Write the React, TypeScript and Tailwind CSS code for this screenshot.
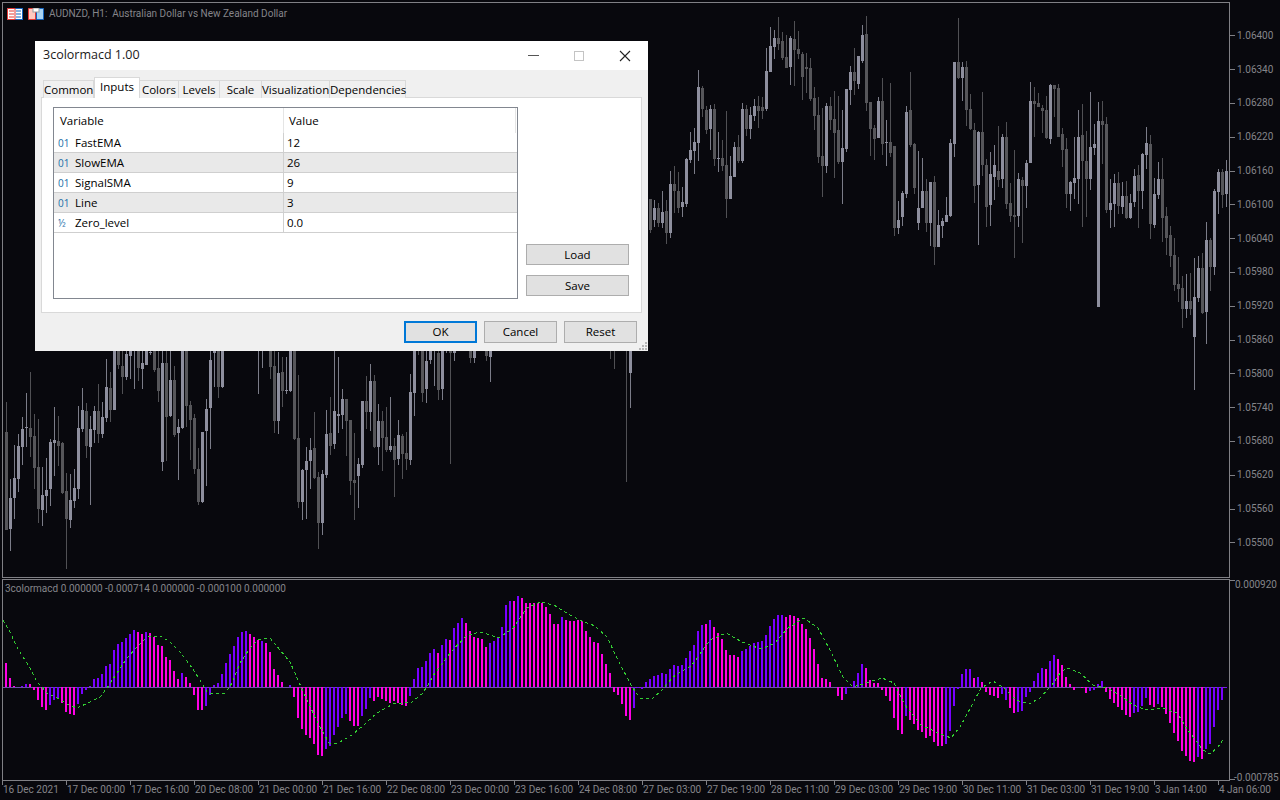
import React from "react";

type Candle = { x: number; wt: number; bt: number; bb: number; wb: number; light: boolean };

function parseCandles(start: number, base: number, scale: number, src: string): Candle[] {
  const out: Candle[] = [];
  src.trim().split(/\s+/).forEach((tok, k) => {
    if (tok === "-") return;
    const light = tok[0] === "l";
    const [wt, bt, bb, wb] = tok.slice(1).split(",").map(Number);
    out.push({
      x: 5 + 4 * (start + k),
      wt: base + wt / scale,
      bt: base + bt / scale,
      bb: base + bb / scale,
      wb: base + wb / scale,
      light,
    });
  });
  return out;
}

const candles: Candle[] = [
  ...parseCandles(0, 350, 3, `d155,247,540,540 l388,444,537,603 l285,384,444,507 l252,288,387,426 l201,237,290,345 l129,232,235,290 d66,234,261,321 d192,258,354,417 d207,351,477,519 l351,435,480,528
  l324,420,438,489 l267,276,417,468 l171,270,279,378 d198,273,288,348 d276,279,429,432 d369,423,507,657 l372,450,510,534 l357,414,453,474 l168,234,417,447 l114,180,237,246
  d159,183,288,324 l198,237,291,465 l168,183,240,279 d102,183,252,279 l156,201,252,264 l27,111,204,216 d66,114,180,216 l0,0,180,180 d0,0,45,57 d0,48,81,132
  l0,12,81,90 l0,0,18,87 l0,0,0,117 d0,0,54,93 l0,39,57,117 l0,0,45,45 l0,6,9,15 d0,0,60,66 d0,54,123,156 l0,39,336,363
  d0,39,201,333 l0,90,198,201 d48,90,255,261 l207,231,249,390 l0,0,234,237 d0,0,168,231 d153,165,210,330 d192,204,357,372 d294,357,456,465 l246,246,456,459
  l147,177,243,408 l0,30,174,297 l0,0,9,111 d0,0,111,144 l0,0,111,114 - - - - -
  - - - l0,0,0,132 l0,0,0,54 - d0,0,51,87 d0,48,213,249 l6,69,213,252 d21,66,123,171
  l21,120,123,132 l0,0,123,126 d0,0,267,270 d75,264,456,474 l357,360,456,510 l291,333,360,507 l264,300,333,417 d186,294,384,387 d366,381,519,597`),
  ...parseCandles(79, 350, 3, `l360,372,519,555 l180,252,375,384 d141,249,288,315 l0,183,282,297 l21,192,198,249 l117,147,195,237 d147,147,213,318 d210,210,393,435 d249,390,399,510 l324,342,378,474
  l153,153,345,354 d78,153,186,237 l42,93,186,243 d75,93,291,294 l162,213,291,345 d183,213,264,363 d171,261,300,306 l141,288,300,306 d264,288,330,441 l210,255,327,345
  d252,258,312,387 d246,309,327,360 l72,126,330,345 l0,0,129,198 d0,0,0,15 d0,0,129,156 l0,33,117,159 l0,0,30,42 l0,0,0,108 d0,9,120,150
  l0,0,117,150 l0,0,0,9 d0,0,9,342 l0,0,9,33 - - - d0,0,24,39 l0,0,24,39 -
  - d0,0,18,33 l0,0,21,96`),
  ...parseCandles(151, 350, 3, `d0,0,0,27 d0,0,0,57 - - d0,0,0,396 l0,0,69,174`),
  ...parseCandles(161, 0, 3, `d597,597,690,700 l600,624,660,680 d610,624,670,680 l573,636,669,684 d600,633,699,732 l514,552,699,714 d498,552,573,639 d516,573,624,639 l561,606,621,651 l474,477,612,621
  l396,450,480,489 l384,426,453,522 l210,261,429,483 d258,264,327,351 d318,330,390,402 l315,327,387,450 d312,327,477,498 l396,474,477,516 d420,474,498,513 d333,495,597,654
  l468,528,597,597 l426,441,531,531 d405,441,483,490 l309,327,483,489 d315,327,387,408 l320,345,387,417 l297,318,348,363 d288,318,333,384 d291,321,333,357 l144,213,327,333
  l81,138,216,216 l90,114,141,177 d51,114,132,150 d96,123,174,180 d105,171,204,204 l108,114,201,255 d63,117,150,258 d93,147,162,177 d156,162,231,300 d159,201,207,279
  d174,204,297,303 d261,294,348,390 d291,345,471,489 d324,468,498,591 l309,318,498,519 d291,318,360,390 d273,357,399,534 d288,390,486,492 l330,444,486,612 l267,267,447,456
  l198,216,270,315 d144,216,243,285 l168,168,252,267 l75,105,183,189 d48,102,309,333 d306,306,387,468 d375,384,417,480 l291,303,414,414 d234,303,432,465 l360,426,429,498
  d249,426,459,471 d438,438,684,708 l603,660,684,702 l573,579,651,678 l318,336,582,594 d216,330,435,441 d429,432,564,582 l453,624,669,690 l474,573,624,624 d537,573,669,696
  l546,546,669,738 d528,546,741,795 l630,675,741,741 l654,663,678,714 l591,645,666,666 l417,429,648,651 l186,186,432,471 d54,186,234,237 l186,201,234,303 d183,201,330,378`),
  ...parseCandles(241, 0, 3, `d282,327,387,390 d369,390,558,609 l393,396,555,735 d276,396,495,528 d477,495,621,681 l456,522,615,678 l435,495,531,600 d378,513,540,561 l402,411,537,564 d366,411,612,627
  d549,609,648,666 d450,645,651,774 l519,537,648,681 d531,540,558,729 l480,489,558,624 l246,303,489,489 d261,303,312,411 d279,309,321,321 d315,324,333,399 d288,330,414,417
  l252,255,417,432 d255,255,267,351 d252,264,411,411 d384,402,450,501 d414,447,582,624 l543,546,582,633 l411,534,549,597 l330,411,537,612 d312,405,483,681 d393,483,537,651
  l276,441,537,570 l372,432,444,465 l306,363,921,921 d303,363,375,492 d351,372,630,639 l537,609,630,684 l522,549,612,681 d516,549,618,642 l546,588,621,642 d543,588,654,657
  l582,609,654,657 l507,528,606,621 d495,525,573,684 l459,462,573,627 l381,429,465,507 d405,432,672,717 l534,582,675,684 l486,537,585,597 d474,537,654,726 d621,648,714,765
  d678,705,768,801 d714,765,855,873 d771,852,867,906`),
  ...parseCandles(294, 140, 3, `d408,444,507,564 l402,483,507,534 d399,483,507,525 l354,471,591,750 l348,384,474,486 d339,384,519,522 l246,300,516,612 d294,300,381,453 l147,153,381,405 l87,96,156,222 d87,96,165,204 l60,93,162,201`),
];

const histSrc = `m72 m28 m4 p2 p4 p10 m10 m-8 m-40 m-60 m-70 p-55 p-40 p-33 m-48 m-74 m-82 m-85 p-52 p-20
p-10 p4 p26 p28 p40 p64 p70 p112 p130 p136 p147 p160 p172 m166 m160 p166 m163 m150 m128 m125
m92 m82 m50 m25 p43 m31 m13 m-25 m-70 m-70 p-58 p-25 p6 p13 p40 p73 p100 p123 p150 p167
p168 m160 m150 m142 p140 m133 m106 m55 m36 m16 p-1 p6 m-30 m-94 m-127 m-145 m-153 m-172 m-205
m-208 p-185 p-176 p-143 p-119 p-92 p-80 m-101 m-116 m-116
p-86 p-65 p-32 m-41 m-30 m-35 m-41 m-48 m-41 m-48
m-53 m-56 p-26 p25 p58 p60 p79 p103 p115 m103
p127 p145 m142 p178 p194 p208 m193 m169 m151 m148
m145 m121 p133 p139 p147 p181 p247 p259 m259 p274
m268 m253 m253 m253 m253 m253 m241 m220 m190 m190
p211 m202 m199 m199 m202 m199 m169 m151 m136 m133
m100 m70 m43 m-14 m-23 m-50 m-86 m-98 p-62 p-2
p-5 p16 p25 p34 p37 p43 p40 p55 p67 p64
p67 p88 p109 p127 p169 p187 m190 p202 m181 m163
m145 m112 m97 m97 m91 p109 p115 p124 p133 p136
p139 p157 p184 p205 p217 p217 m211 m217 m214 m208
m190 m175 m148 m115 m70 m28 m25 m16 m0 m-26
m-38 p-20 p-2 p19 p43 p70 m58 m22 m13 m13
m-8 m-26 m-41 m-92 m-128 m-140 p-86 m-98 m-110 m-128
m-136 m-152 m-146 m-164 m-176 m-176 p-170 p-132 p-56 p-6
p40 p55 p55 m28 p31 m16 m-14 m-23 m-26 m-32
p-20 p-38 m-62 m-77 p-74 p-71 p-29 p-14 p19 p43
p58 m55 p79 p97 m85 m67 m31 m10 m-8 m-1 m-4 m-18 p-12 p-8 p9 p19
m-14 m-37 m-47 m-61 m-70 m-85 m-91 p-79 p-76 p-56 p-34 m-55 m-59 p-50 m-60 m-82 m-107 m-139 m-163 m-193
m-208 m-222 m-226 p-211 m-217 p-185 p-172 p-121 p-70 p-40 p-4`;

const hist = histSrc.trim().split(/\s+/).map((t, i) => ({
  x: 5 + 4 * i,
  purple: t[0] === "p",
  v: Number(t.slice(1)) / 3,
}));

const signal =
  "3,620 10,632 17,647 23,657 30,668 37,682 47,693 57,698 67,704 77,708 88,703 100,697 107,688 117,673 127,658 137,647 147,637 160,636 170,642 180,652 190,665 200,680 207,692 213,694 225,693 232,683 240,663 250,648 258,640 270,638 280,650 290,662 298,680 307,700 318,723 329,743 338,743 352,735 366,723 377,713 393,704 412,702 423,693 435,673 451,652 467,635 481,632 499,638 513,628 527,608 540,602 554,605 568,614 582,621 595,626 607,637 618,660 632,687 641,699 653,698 662,690 673,677 692,665 710,640 726,633 742,642 761,649 775,643 788,628 804,618 818,628 830,650 843,677 853,687 866,683 882,678 894,683 905,705 921,725 938,733 951,738 960,727 972,705 981,688 993,681 1004,688 1016,700 1029,704 1040,698 1052,685 1060,673 1067,668 1080,673 1093,685 1107,688 1120,695 1133,705 1147,710 1163,708 1177,713 1190,733 1203,750 1210,754 1218,747 1224,738";

const prices = ["1.06400","1.06340","1.06280","1.06220","1.06160","1.06100","1.06040","1.05980","1.05920","1.05860","1.05800","1.05740","1.05680","1.05620","1.05560","1.05500"];
const times = ["16 Dec 2021","17 Dec 00:00","17 Dec 16:00","20 Dec 08:00","21 Dec 00:00","21 Dec 16:00","22 Dec 08:00","23 Dec 00:00","23 Dec 16:00","24 Dec 08:00","27 Dec 03:00","27 Dec 19:00","28 Dec 11:00","29 Dec 03:00","29 Dec 19:00","30 Dec 11:00","31 Dec 03:00","31 Dec 19:00","3 Jan 14:00","4 Jan 06:00"];
const tabs = [
  { n: "Common", w: "w-[51px]" },
  { n: "Inputs", w: "w-[46px]" },
  { n: "Colors", w: "w-[40px]" },
  { n: "Levels", w: "w-[42px]" },
  { n: "Scale", w: "w-[43px]" },
  { n: "Visualization", w: "w-[69px]" },
  { n: "Dependencies", w: "w-[77px]" },
];
const rows = [
  { i: "01", n: "FastEMA", v: "12" },
  { i: "01", n: "SlowEMA", v: "26" },
  { i: "01", n: "SignalSMA", v: "9" },
  { i: "01", n: "Line", v: "3" },
  { i: "½", n: "Zero_level", v: "0.0" },
];

function MainChart() {
  return (
    <svg viewBox="3 3 1226 574" width={1226} height={574} className="block" shapeRendering="crispEdges">
      {candles.map((c, i) => (
        <g key={i}>
          <rect x={c.x + 1} y={c.wt} width={1} height={Math.max(c.wb - c.wt, 0)} fill={c.light ? "#7b7c88" : "#505054"} />
          {c.bb > c.bt && <rect x={c.x} y={c.bt} width={3} height={Math.max(c.bb - c.bt, 1)} fill={c.light ? "#8e8f9e" : "#56565a"} />}
        </g>
      ))}
    </svg>
  );
}

function IndicatorChart() {
  return (
    <svg viewBox="3 580 1226 200" width={1226} height={200} className="block" shapeRendering="crispEdges">
      <rect x={3} y={687} width={1224} height={1} fill="#6d4fa8" />
      {hist.map((b, i) =>
        b.v !== 0 ? (
          <rect
            key={i}
            x={b.x}
            y={b.v > 0 ? 687.4 - b.v : 687}
            width={2}
            height={Math.abs(b.v)}
            fill={b.purple ? "#7a00ff" : "#ff00e6"}
          />
        ) : null
      )}
      <polyline points={signal} fill="none" stroke="#32cd32" strokeWidth={1} strokeDasharray="3 3" />
    </svg>
  );
}

function TableIcon() {
  return (
    <svg width="16" height="12" viewBox="0 0 16 12" className="block">
      <rect x="0.5" y="0.5" width="15" height="11" fill="#fff" stroke="#1565c0" />
      <path d="M0.5 0.5H8V11.5H0.5Z" fill="#fff" stroke="#e53935" />
      <path d="M2 3h5M2 6h5M2 9h5" stroke="#e53935" strokeWidth="1" />
      <path d="M9 3h5M9 6h5M9 9h5" stroke="#1565c0" strokeWidth="1" />
    </svg>
  );
}

function SaveIcon() {
  return (
    <svg width="16" height="12" viewBox="0 0 16 12" className="block">
      <path d="M0.5 0.5H7.5V11.5H0.5Z" fill="#ffc9c0" stroke="#e53935" />
      <path d="M8.5 0.5H15.5V11.5H8.5Z" fill="#a8d4f5" stroke="#1565c0" />
      <rect x="5" y="0" width="6" height="4" fill="#fff" stroke="#9e9e9e" />
    </svg>
  );
}

function Dialog() {
  return (
    <div className="absolute left-[35px] top-[41px] w-[613px] h-[310px] bg-[#f0f0f0] flex flex-col text-black text-[11.5px] [font-family:'Open_Sans',sans-serif]">
      <div className="h-[29px] bg-white flex items-center shrink-0">
        <span className="ml-[8px] text-[12.5px] text-[#1a1a1a]">3colormacd 1.00</span>
        <div className="ml-auto flex items-center">
          <span className="w-[46px] flex justify-center"><span className="w-[11px] h-px bg-[#555]" /></span>
          <span className="w-[46px] flex justify-center"><span className="w-[10px] h-[10px] border border-[#c4c4c4]" /></span>
          <span className="w-[46px] flex justify-center">
            <svg width="12" height="12" viewBox="0 0 12 12"><path d="M1 1L11 11M11 1L1 11" stroke="#222" strokeWidth="1.1" /></svg>
          </span>
        </div>
      </div>
      <div className="flex ml-[8px] h-[20px] mt-[8px] items-end relative z-10 shrink-0">
        {tabs.map((t) =>
          t.n === "Inputs" ? (
            <div key={t.n} className={`${t.w} h-[21px] bg-white border border-b-0 border-[#d9d9d9] text-center leading-[18px]`}>{t.n}</div>
          ) : (
            <div key={t.n} className={`${t.w} h-[18px] bg-[#f0f0f0] border border-b-0 border-[#d9d9d9] -ml-px first:ml-0 text-center leading-[18px]`}>{t.n}</div>
          )
        )}
      </div>
      <div className="mx-[6px] h-[216px] bg-white border border-[#d9d9d9] -mt-px flex pl-[11px] pt-[9px] gap-[8px] shrink-0">
        <div className="w-[465px] h-[192px] border border-[#828790] flex flex-col">
          <div className="h-[25px] flex shrink-0">
            <div className="w-[230px] border-r border-[#e5e5e5] pl-[6px] leading-[26px]">Variable</div>
            <div className="w-[232px] border-r border-[#e5e5e5] pl-[5px] leading-[26px]">Value</div>
          </div>
          {rows.map((r, i) => (
            <div key={r.n} className={`h-[20px] flex border-b border-[#cfcfcf] shrink-0 ${i % 2 === 1 ? "bg-[#e9e9e9]" : "bg-white"}`}>
              <div className="w-[230px] flex items-center border-r border-[#d0d0d0] pl-[4px]">
                <span className="w-[17px] text-[#1a6ea8] text-[10px] leading-none">{r.i}</span>
                <span>{r.n}</span>
              </div>
              <div className="pl-[3px] flex items-center">{r.v}</div>
            </div>
          ))}
        </div>
        <div className="flex flex-col pt-[137px] gap-[10px] ">
          <button className="w-[103px] h-[21px] bg-[#e1e1e1] border border-[#adadad] leading-none">Load</button>
          <button className="w-[103px] h-[21px] bg-[#e1e1e1] border border-[#adadad] leading-none">Save</button>
        </div>
      </div>
      <div className="flex justify-end gap-[7px] pr-[11px] mt-[8px]">
        <button className="w-[73px] h-[22px] bg-[#e1e1e1] border-2 border-[#0078d7] leading-none">OK</button>
        <button className="w-[73px] h-[22px] bg-[#e1e1e1] border border-[#adadad] leading-none">Cancel</button>
        <button className="w-[73px] h-[22px] bg-[#e1e1e1] border border-[#adadad] leading-none">Reset</button>
      </div>
      <svg width="9" height="9" viewBox="0 0 9 9" className="absolute right-0 bottom-0">
        <path d="M6 0h2v2H6zM3 3h2v2H3zM6 3h2v2H6zM0 6h2v2H0zM3 6h2v2H3zM6 6h2v2H6z" fill="#b5b5b5" />
      </svg>
    </div>
  );
}

export default function App() {
  return (
    <div className="relative w-[1280px] h-[800px] overflow-hidden bg-[#08080d] text-[#85858a] text-[10px] pl-[2px] pt-[2px] [font-family:Roboto,sans-serif]">
      <div className="flex h-[576px]">
        <div className="relative w-[1228px] border border-[#808085]">
          <MainChart />
          <div className="absolute left-[4px] top-[5px] flex items-center">
            <TableIcon />
            <span className="ml-[5px]"><SaveIcon /></span>
            <span className="ml-[5px] leading-none whitespace-pre">AUDNZD, H1:  Australian Dollar vs New Zealand Dollar</span>
          </div>
        </div>
        <div className="pt-[17px] flex flex-col">
          {prices.map((p) => (
            <div key={p} className="h-[33.8px] flex items-center">
              <span className="w-[5px] h-px bg-[#808085]" />
              <span className="ml-[2px] leading-none">{p}</span>
            </div>
          ))}
        </div>
      </div>
      <div className="flex h-[202px] mt-px">
        <div className="relative w-[1228px] border border-[#808085]">
          <IndicatorChart />
          <div className="absolute left-[2px] top-[4px] leading-none whitespace-pre">3colormacd 0.000000 -0.000714 0.000000 -0.000100 0.000000</div>
        </div>
        <div className="flex flex-col justify-between w-[50px] h-[202px]">
          <div className="flex items-start">
            <span className="w-[5px] h-px bg-[#808085] mt-[1px]" />
            <span className="ml-[0px] mt-[1px] leading-none">0.000920</span>
          </div>
          <div className="flex items-end">
            <span className="w-[5px] h-px bg-[#808085] mb-[1px]" />
            <span className="ml-[-1px] mb-[-2px] leading-none">-0.000785</span>
          </div>
        </div>
      </div>
      <div className="flex">
        {times.map((t) => (
          <div key={t} className="w-[64px] shrink-0 h-[17px] border-l border-transparent relative">
            <span className="absolute left-[-1px] top-0 w-px h-[4px] bg-[#808085]" />
            <span className="block pt-[4px] leading-[10px] whitespace-nowrap">{t}</span>
          </div>
        ))}
      </div>
      <Dialog />
    </div>
  );
}
